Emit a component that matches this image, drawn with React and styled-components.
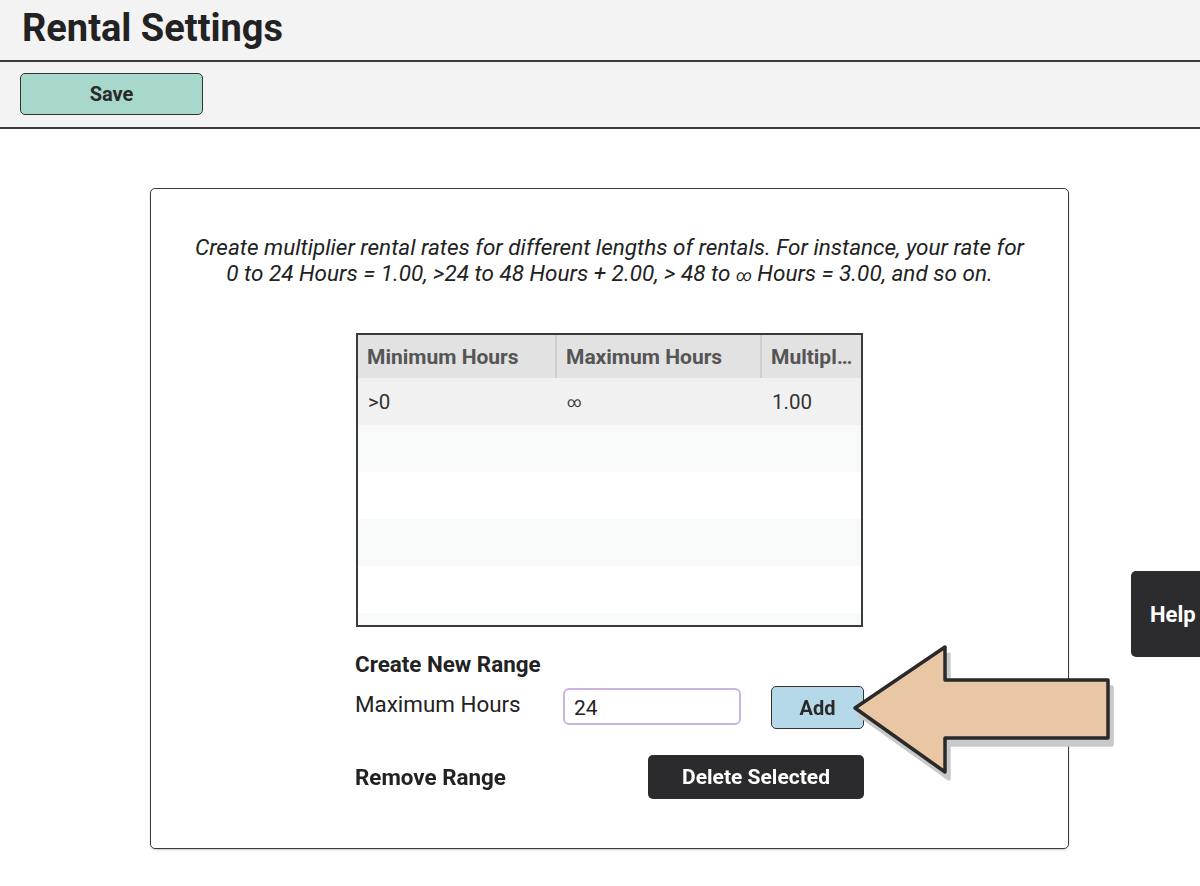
import React from "react";
import styled, { createGlobalStyle } from "styled-components";

const Global = createGlobalStyle`
  html, body { margin: 0; padding: 0; background: #ffffff; }
  body { font-family: Roboto, "Liberation Sans", Arial, sans-serif; color: #222; }
  * { box-sizing: border-box; }
`;

const Page = styled.div`
  position: relative;
  min-height: 886px;
  overflow: hidden;
`;

const Header = styled.header`
  height: 62px;
  padding: 6px 0 0 22px;
  background: #f3f3f3;
  border-bottom: 2px solid #3a3a3a;
`;

const Title = styled.h1`
  margin: 0;
  font-size: 38px;
  line-height: 1.2;
  font-weight: 700;
  color: #222;
`;

const Toolbar = styled.div`
  height: 67px;
  padding: 11px 0 0 20px;
  background: #f3f3f3;
  border-bottom: 2px solid #3a3a3a;
`;

const Button = styled.button`
  font-family: Roboto, "Liberation Sans", Arial, sans-serif;
  font-weight: 700;
  font-size: ${(p) => p.$fs || 20}px;
  width: ${(p) => p.$w}px;
  height: ${(p) => p.$h}px;
  background: ${(p) => p.$bg};
  color: ${(p) => p.$fg || "#2a2a2a"};
  border: ${(p) => (p.$border ? "1.5px solid #333" : "none")};
  border-radius: 5px;
  padding: 0;
  cursor: pointer;
`;

const Card = styled.section`
  width: 919px;
  margin: 59px 0 0 150px;
  border: 1.5px solid #3a3a3a;
  border-radius: 5px;
  padding: 45px 0 49px;
  box-shadow: 0 1px 2px rgba(0, 0, 0, 0.2);
`;

const Description = styled.p`
  margin: 0 0 47px;
  text-align: center;
  font-style: italic;
  font-size: 22.5px;
  line-height: 26px;
  color: #222;
`;

const Inf = styled.span`
  font-size: ${(p) => p.$fs}px;
  line-height: 1;
`;

const Table = styled.div`
  width: 507px;
  height: 294px;
  margin: 0 auto;
  border: 2px solid #3a3a3a;
  overflow: hidden;
`;

const Grid = styled.div`
  display: grid;
  grid-template-columns: 199px 205px 99px;
  grid-template-rows: 43px;
  grid-auto-rows: 47px;
`;

const HeadCell = styled.div`
  display: flex;
  align-items: center;
  padding: 0 8px 0 9px;
  background: #e2e2e2;
  color: #555;
  font-weight: 700;
  font-size: 21px;
  white-space: nowrap;
  overflow: hidden;
  border-right: ${(p) => (p.$last ? "none" : "2px solid #cfcfcf")};
  & > span { overflow: hidden; text-overflow: ellipsis; }
`;

const Cell = styled.div`
  display: flex;
  align-items: center;
  padding: 0 10px;
  font-size: 20.5px;
  color: #333;
  background: ${(p) => p.$bg};
`;

const Form = styled.div`
  width: 509px;
  margin: 24px auto 0;
  display: flex;
  flex-direction: column;
`;

const Heading = styled.div`
  font-weight: 700;
  font-size: 22.4px;
  line-height: 26px;
  color: #222;
`;

const Row = styled.div`
  display: flex;
  align-items: ${(p) => p.$align || "center"};
  margin-top: ${(p) => p.$mt}px;
`;

const Label = styled.div`
  width: 208px;
  font-size: 22.4px;
  line-height: 26px;
  color: #222;
  font-weight: ${(p) => (p.$bold ? 700 : 400)};
  margin-top: ${(p) => p.$mt || 0}px;
`;

const Input = styled.input`
  width: 178px;
  height: 37px;
  margin-top: 2px;
  border: 2px solid #cdb3df;
  border-radius: 6px;
  padding: 2px 0 0 9px;
  font-family: Roboto, "Liberation Sans", Arial, sans-serif;
  font-size: 21px;
  color: #222;
  outline: none;
  caret-color: #111;
  background: #fff;
`;

const Spacer = styled.div`
  flex: 1;
`;

const HelpTab = styled.div`
  position: absolute;
  top: 571px;
  left: 1131px;
  width: 90px;
  height: 86px;
  background: #2c2c2e;
  border-radius: 5px 0 0 5px;
  color: #fff;
  font-weight: 700;
  font-size: 22px;
  display: flex;
  align-items: center;
  padding-left: 19px;
`;

const ArrowSvg = styled.svg`
  position: absolute;
  left: 840px;
  top: 635px;
  width: 285px;
  height: 155px;
  pointer-events: none;
`;

const rowBgs = ["#f1f1f1", "#f8f9f9", "#ffffff", "#f8f9f9", "#ffffff", "#f8f9f9"];
const data = [[">0", <Inf key="i" $fs={14}>∞</Inf>, "1.00"]];

const arrowPts = "15,73 105,12 105,45 268,45 268,103 105,103 105,137";

export default function App() {
  return (
    <Page>
      <Global />
      <Header>
        <Title>Rental Settings</Title>
      </Header>
      <Toolbar>
        <Button $w={183} $h={42} $bg="#a7d8cb" $border>
          Save
        </Button>
      </Toolbar>
      <Card>
        <Description>
          Create multiplier rental rates for different lengths of rentals. For instance, your rate for
          <br />
          0 to 24 Hours = 1.00, &gt;24 to 48 Hours + 2.00, &gt; 48 to <Inf $fs={16}>∞</Inf> Hours = 3.00, and so on.
        </Description>
        <Table>
          <Grid>
            <HeadCell><span>Minimum Hours</span></HeadCell>
            <HeadCell><span>Maximum Hours</span></HeadCell>
            <HeadCell $last><span>Multiplier</span></HeadCell>
            {rowBgs.map((bg, i) =>
              [0, 1, 2].map((c) => (
                <Cell key={`${i}-${c}`} $bg={bg}>
                  {data[i] ? data[i][c] : ""}
                </Cell>
              ))
            )}
          </Grid>
        </Table>
        <Form>
          <Heading>Create New Range</Heading>
          <Row $mt={9} $align="flex-start">
            <Label $mt={5}>Maximum Hours</Label>
            <Input defaultValue="24" autoFocus />
            <Spacer />
            <Button $w={93} $h={43} $bg="#b6d9ea" $border>
              Add
            </Button>
          </Row>
          <Row $mt={26}>
            <Label $bold>Remove Range</Label>
            <Spacer />
            <Button $w={216} $h={44} $bg="#2b2b2d" $fg="#ffffff" $fs={21}>
              Delete Selected
            </Button>
          </Row>
        </Form>
      </Card>
      <HelpTab>Help</HelpTab>
      <ArrowSvg viewBox="0 0 285 155">
        <polygon
          points={arrowPts}
          transform="translate(4,7)"
          fill="#c9c9c9"
          stroke="#c9c9c9"
          strokeWidth="3.5"
          strokeLinejoin="round"
        />
        <polygon
          points={arrowPts}
          fill="#eac7a4"
          stroke="#2a2a2a"
          strokeWidth="3.5"
          strokeLinejoin="round"
        />
      </ArrowSvg>
    </Page>
  );
}
